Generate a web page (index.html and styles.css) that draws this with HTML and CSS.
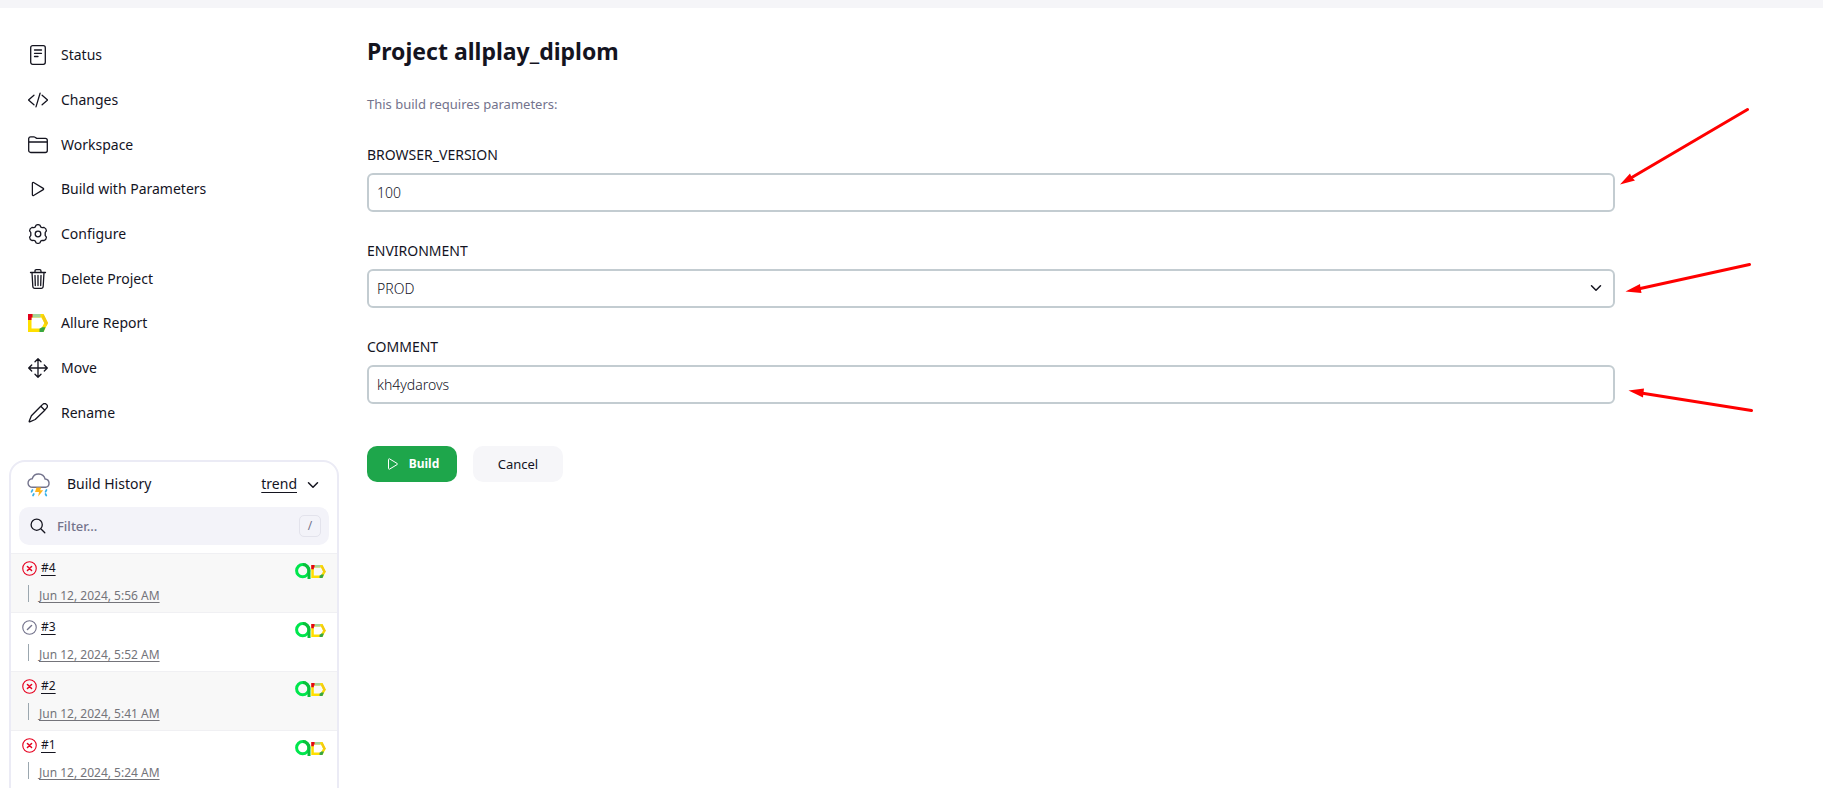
FILE: index.html
```html
<!DOCTYPE html>
<html lang="en">
<head>
<meta charset="utf-8">
<title>Project allplay_diplom</title>
<link rel="stylesheet" href="styles.css">
</head>
<body>
<svg class="defs" aria-hidden="true">
  <defs>
    <symbol id="play" viewBox="0 0 512 512"><path d="M112 111v290c0 17.44 17 28.52 31 20.16l247.9-148.37c12.12-7.25 12.12-26.33 0-33.58L143 90.84c-14-8.36-31 2.72-31 20.16z" fill="none" stroke="currentColor" stroke-miterlimit="10" stroke-width="32"/></symbol>
    <symbol id="chevron" viewBox="0 0 512 512"><path d="M112 184l144 144 144-144" fill="none" stroke="currentColor" stroke-linecap="round" stroke-linejoin="round" stroke-width="48"/></symbol>
    <symbol id="failed" viewBox="0 0 16 16"><g fill="none" stroke="#e6001f" stroke-linecap="round"><circle cx="8" cy="8" r="7.200" stroke-width="1.200"/><path d="M5.800 5.800l4.400 4.400M10.200 5.800l-4.400 4.400" stroke-width="1.600"/></g></symbol>
    <symbol id="aborted" viewBox="0 0 16 16"><g fill="none" stroke="#73738c" stroke-linecap="round"><circle cx="8" cy="8" r="7.200" stroke-width="1.200"/><path d="M10.200 5.800l-4.400 4.400" stroke-width="1.500"/></g></symbol>
    <symbol id="allure" viewBox="0 0 20 18"><path d="M0 0h15.500L20 9l-4.500 9H0zM3.500 3.500v11h9.800L16.300 9l-3-5.500z" fill="#ffdf00" fill-rule="evenodd"/><path d="M4.500 0h8v3.500h-8z" fill="#a4d49b"/><path d="M14 3l1.500-3L20 9l-1.500 3-2.200-3z" fill="#f3cb12"/><path d="M0 0h4.500v3.500h-1V6H0z" fill="#e2001a"/><path d="M11.500 18v-3.200l2.500-1.600h3.500L15.500 18z" fill="#37a742"/></symbol>
    <symbol id="testops" viewBox="0 0 16 16"><circle cx="7.700" cy="7.700" r="6.100" fill="none" stroke="#00e64d" stroke-width="3"/><path d="M8 1.600a6.100 6.100 0 0 1 6 6.100V16" fill="none" stroke="#0abf3c" stroke-width="3"/></symbol>
  </defs>
</svg>
<div class="topbar"></div>
<div class="page">
  <aside class="side">
    <nav class="tasks">
      <a class="task" href="#"><svg class="icon" viewBox="0 0 20 20"><g fill="none" stroke="currentColor" stroke-linecap="round"><rect x="2.700" y=".7" width="14.600" height="18.600" rx="2" stroke-width="1.300"/><path d="M6.500 5h7M6.500 8.300h7M6.500 11.500h3.500" stroke-width="1.300"/></g></svg><span>Status</span></a>
      <a class="task" href="#"><svg class="icon" viewBox="0 0 512 512"><path d="M160 368L32 256l128-112M352 368l128-112-128-112M304 96l-96 320" transform="translate(-22 -22) scale(1.090)" fill="none" stroke="currentColor" stroke-linecap="round" stroke-linejoin="round" stroke-width="30"/></svg><span>Changes</span></a>
      <a class="task" href="#"><svg class="icon" viewBox="0 0 20 20"><path d="M.7 15.500v-12A2 2 0 0 1 2.700 1.900h3.200c.5 0 .8.100 1.200.4l1.200.8c.3.200.7.300 1.100.3h7.900a2 2 0 0 1 2 2v10.100a2 2 0 0 1-2 2H2.700a2 2 0 0 1-2-2zM.7 7h18.600" fill="none" stroke="currentColor" stroke-width="1.300"/></svg><span>Workspace</span></a>
      <a class="task" href="#"><svg class="icon"><use href="#play"/></svg><span>Build with Parameters</span></a>
      <a class="task" href="#"><svg class="icon" viewBox="0 0 20 20"><g fill="none" stroke="currentColor" stroke-width="1.300" stroke-linejoin="round"><circle cx="10" cy="10" r="2.800"/><path d="M8 1.300Q10 0 12 1.300l.7 1.600 1.500.8 1.900-.2q2.200 1 2.300 3.300l-1.200 1.700v3l1.200 1.700q-.1 2.300-2.300 3.300l-1.900-.2-1.500.8-.7 1.600Q10 20 8 18.700l-.7-1.600-1.500-.8-1.900.2q-2.200-1-2.300-3.300l1.200-1.700v-3L1.600 6.800q.1-2.300 2.300-3.300l1.900.2 1.500-.8z"/></g></svg><span>Configure</span></a>
      <a class="task" href="#"><svg class="icon" viewBox="0 0 20 20"><path d="M4 3.500l.8 13.700c.1 1.200.9 2.100 2 2.100h6.400c1.100 0 1.900-.9 2-2.100L16 3.500M2.500 3.500h15M7 3.300V2c0-.8.500-1.300 1.300-1.300h3.400c.8 0 1.300.5 1.300 1.300v1.300M10 6.500v10M7 6.500l.3 10M13 6.500l-.3 10" fill="none" stroke="currentColor" stroke-width="1.300" stroke-linecap="round" stroke-linejoin="round"/></svg><span>Delete Project</span></a>
      <a class="task" href="#"><svg class="icon"><use href="#allure"/></svg><span>Allure Report</span></a>
      <a class="task" href="#"><svg class="icon" viewBox="0 0 20 20"><path d="M10 .8v18.400M.8 10h18.400M7 3.700l3-3 3 3M7 16.300l3 3 3-3M3.700 7l-3 3 3 3M16.300 7l3 3-3 3" fill="none" stroke="currentColor" stroke-width="1.300" stroke-linecap="round" stroke-linejoin="round"/></svg><span>Move</span></a>
      <a class="task" href="#"><svg class="icon" viewBox="0 0 20 20"><path d="M12.800 3.200L3.400 12.800 1.200 18.300c-.1.400.2.600.5.500l5.500-2.300 9.600-9.300M12.800 3.200l1.900-1.800a2.600 2.600 0 0 1 3.800 3.800l-1.700 2zM12.800 3.200l4 4" fill="none" stroke="currentColor" stroke-width="1.300" stroke-linecap="round" stroke-linejoin="round"/></svg><span>Rename</span></a>
    </nav>

    <section class="history">
      <header class="history-head">
        <svg class="weather" viewBox="0 0 24 24"><path d="M5.500 14.300a4.300 4.300 0 0 1-.3-8.600 6.700 6.700 0 0 1 12.900.3 4.200 4.200 0 0 1 .6 8.300z" fill="none" stroke="#73738c" stroke-width="1.400"/><path d="M9.500 14.500h4.700l-1 2.700h3l-5 6.300.8-4.500H8z" fill="#ffb319"/><path d="M5.500 17l-1 1.800M6.800 21l-.8 1.500M19.500 17l-1 1.800M18.500 21l.8 1.500" stroke="#36b0e8" stroke-width="1.700" stroke-linecap="round"/></svg>
        <h2 class="history-title">Build History</h2>
        <a class="trend" href="#">trend</a>
        <svg class="chev"><use href="#chevron"/></svg>
      </header>
      <label class="filter">
        <svg class="search" viewBox="0 0 16 16"><path d="M10.800 10.800L14.800 14.800M12.300 6.700a5.600 5.600 0 1 1-11.200 0 5.600 5.600 0 0 1 11.200 0z" fill="none" stroke="currentColor" stroke-width="1.300" stroke-linecap="round"/></svg>
        <input class="filter-input" type="text" placeholder="Filter..." aria-label="Filter builds">
        <kbd class="key">/</kbd>
      </label>
      <ul class="builds">
        <li class="build"><svg class="ball"><use href="#failed"/></svg><a class="num" href="#">#4</a><span class="badges"><svg class="ops"><use href="#testops"/></svg><svg class="rep"><use href="#allure"/></svg></span><span class="when"><a class="date" href="#">Jun 12, 2024, 5:56 AM</a></span></li>
        <li class="build"><svg class="ball"><use href="#aborted"/></svg><a class="num" href="#">#3</a><span class="badges"><svg class="ops"><use href="#testops"/></svg><svg class="rep"><use href="#allure"/></svg></span><span class="when"><a class="date" href="#">Jun 12, 2024, 5:52 AM</a></span></li>
        <li class="build"><svg class="ball"><use href="#failed"/></svg><a class="num" href="#">#2</a><span class="badges"><svg class="ops"><use href="#testops"/></svg><svg class="rep"><use href="#allure"/></svg></span><span class="when"><a class="date" href="#">Jun 12, 2024, 5:41 AM</a></span></li>
        <li class="build"><svg class="ball"><use href="#failed"/></svg><a class="num" href="#">#1</a><span class="badges"><svg class="ops"><use href="#testops"/></svg><svg class="rep"><use href="#allure"/></svg></span><span class="when"><a class="date" href="#">Jun 12, 2024, 5:24 AM</a></span></li>
      </ul>
    </section>
  </aside>

  <main class="main">
    <h1 class="title">Project allplay_diplom</h1>
    <p class="note">This build requires parameters:</p>
    <form class="form">
      <div class="field"><label class="label" for="bv">BROWSER_VERSION</label><input class="control" id="bv" type="text" value="100"></div>
      <div class="field"><label class="label" for="env">ENVIRONMENT</label><div class="select"><select class="control" id="env"><option>PROD</option></select><svg class="select-chev"><use href="#chevron"/></svg></div></div>
      <div class="field"><label class="label" for="com">COMMENT</label><input class="control" id="com" type="text" value="kh4ydarovs"></div>
      <div class="actions">
        <button class="btn primary" type="submit"><svg class="btn-icon"><use href="#play"/></svg>Build</button>
        <button class="btn" type="button">Cancel</button>
      </div>
    </form>
    <svg class="arrows" viewBox="1615 100 208 320" aria-hidden="true"><g stroke="#f00" stroke-width="3" stroke-linecap="round"><path d="M1747.500 109.500L1630 178.500M1749.500 264.500L1638 289M1751.500 410.500L1641 393"/></g><g fill="#f00"><path d="M1620 184.500L1630 173.500l1.500 3.500 3.500 3.500z"/><path d="M1625.500 291.500L1640 284l.5 4 1 5z"/><path d="M1628.500 390.500L1644 388.500l-.5 4-.5 5z"/></g></svg>
  </main>
</div>
</body>
</html>
```
FILE: styles.css
```css
* { box-sizing: border-box; }
html, body { height: 100%; }
body {
  margin: 0;
  display: flex;
  flex-direction: column;
  overflow: hidden;
  background: #fff;
  color: #14141f;
  font: 14px/20px "Noto Sans", "Open Sans", sans-serif;
}
a { color: inherit; }
.defs { position: absolute; width: 0; height: 0; }
.topbar { flex: none; height: 8px; background: #f5f5f8; }
.page { flex: 1; min-height: 0; display: grid; grid-template-columns: 348px 1fr; }

.side { padding: 25px 9px 0; }
.tasks { display: grid; grid-auto-rows: 1fr; min-height: 402px; margin-bottom: 25px; }
.task { display: flex; align-items: center; gap: 13px; padding-left: 19px; text-decoration: none; }
.icon { width: 20px; height: 20px; flex: none; }

.history { padding-bottom: 24px; border: 2px solid #ebebf5; border-radius: 16px; }
.history-head { display: flex; align-items: center; height: 45px; padding: 0 16px; }
.weather { width: 24px; height: 24px; }
.history-title { flex: 1; margin: 0 0 2px 16px; font-size: 14px; font-weight: 400; }
.trend { margin-bottom: 2px; text-underline-offset: 3px; }
.chev { width: 16px; height: 16px; margin-left: 8px; }
.filter { display: flex; align-items: center; height: 38px; margin: 0 8px 8px; padding: 0 8px 0 11px; border-radius: 10px; background: #f3f3f9; }
.search { width: 16px; height: 16px; flex: none; }
.filter-input { flex: 1; min-width: 0; margin-left: 11px; padding: 0; border: 0; background: none; font: 500 13px/20px "Noto Sans", sans-serif; }
.filter-input::placeholder { color: #73738c; opacity: 1; }
.key { width: 22px; height: 22px; border: 1px solid #e3e3ec; border-radius: 5px; color: #73738c; font: 12px/20px "Noto Sans", sans-serif; text-align: center; }

.builds { list-style: none; margin: 0; padding: 0; }
.build { display: grid; grid-template-columns: 15px 1fr auto; grid-template-rows: 20px 20px; column-gap: 4px; row-gap: 7px; height: 59px; padding: 4px 11px 0; border-top: 1px solid #f0f0f3; font-size: 12px; }
.build:nth-child(odd) { background: #f8f8f8; }
.ball { width: 15px; height: 15px; margin-top: 3px; }
.num { justify-self: start; text-underline-offset: 3px; }
.badges { display: flex; align-items: center; padding-top: 6px; height: 20px; }
.ops { width: 16px; height: 16px; }
.rep { width: 15px; height: 13px; }
.when { grid-column: 1 / -1; justify-self: start; height: 17px; margin-left: 6px; padding-left: 10px; border-left: 1px solid #9ba7af; line-height: 22px; }
.date { color: #74747a; text-underline-offset: 2px; }

.main { position: relative; padding: 25px 208px 0 19px; }
.title { margin: 0; font-size: 23px; line-height: 36px; font-weight: 700; }
.note { margin: 25px 0 0; color: #73738c; font-size: 13px; }
.form { margin-top: 31px; }
.field { display: grid; gap: 8px; margin-bottom: 29px; }
.label { font-size: 14px; }
.select { position: relative; }
.control { display: block; width: 100%; height: 39px; padding: 0 8px; border: 2px solid #c3ccd1; border-radius: 6px; appearance: none; background: #fff; color: #14141f; font: 300 14px/20px "Noto Sans", sans-serif; }
.select-chev { position: absolute; right: 11px; top: 11px; width: 16px; height: 16px; pointer-events: none; }
.actions { display: flex; gap: 16px; padding-top: 13px; }
.btn { display: flex; align-items: center; justify-content: center; gap: 8px; min-width: 90px; height: 36px; padding: 0 16px; border: 0; border-radius: 10px; background: #f6f6f9; color: #14141f; font: 400 13px/20px "Noto Sans", sans-serif; }
.primary { background: #1ea64b; color: #fff; font-size: 12px; font-weight: 700; }
.btn-icon { width: 16px; height: 16px; }
.arrows { position: absolute; right: 0; top: 92px; width: 208px; height: 320px; }
```
